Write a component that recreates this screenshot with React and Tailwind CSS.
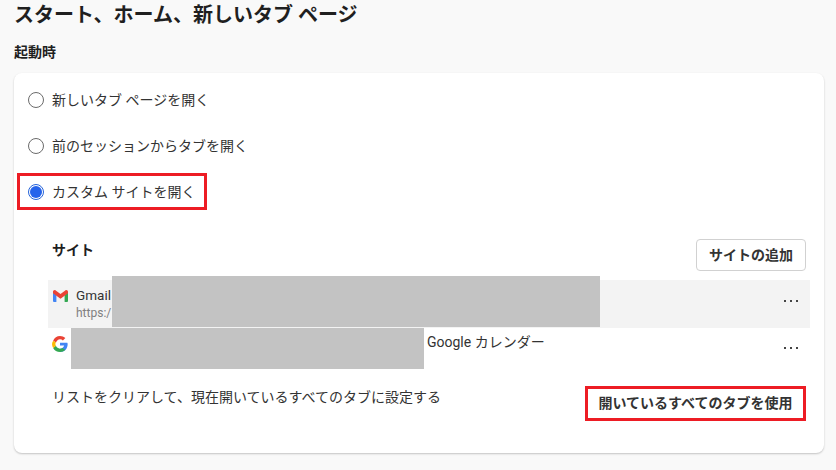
function Radio({ checked }) {
  if (checked) {
    return (
      <span className="flex h-[16px] w-[16px] shrink-0 items-center justify-center rounded-full border border-[#2563d9] bg-white">
        <span className="h-[12px] w-[12px] rounded-full bg-[#2563eb]"></span>
      </span>
    );
  }
  return <span className="h-[16px] w-[16px] shrink-0 rounded-full border-[1.5px] border-[#6b6b6b] bg-white"></span>;
}

function RadioRow({ label, checked }) {
  return (
    <div className="flex h-[46px] items-center gap-[8px] pl-[14px] text-[14px] text-[#333333]">
      <Radio checked={checked} />
      <span>{label}</span>
    </div>
  );
}

function Dots() {
  return (
    <div className="flex gap-[4px]">
      <span className="h-[2px] w-[2px] bg-[#444444]"></span>
      <span className="h-[2px] w-[2px] bg-[#444444]"></span>
      <span className="h-[2px] w-[2px] bg-[#444444]"></span>
    </div>
  );
}

function GmailIcon() {
  return (
    <svg width="15" height="12" viewBox="0 0 15 12">
      <path d="M0 2.500V11a1 1 0 0 0 1 1h2.400V5.200z" fill="#4285f4" />
      <path d="M15 2.500V11a1 1 0 0 1-1 1h-2.400V5.200z" fill="#34a853" />
      <path d="M0 1.800C0 .4 1.600-.4 2.700.4L7.500 4 12.300.4C13.400-.4 15 .4 15 1.800v1.400l-3.400 2.500L7.500 8.700 3.400 5.700 0 3.200z" fill="#ea4335" />
    </svg>
  );
}

function GoogleIcon() {
  return (
    <svg width="16" height="16" viewBox="0 0 48 48">
      <path d="M46 20H24v8.500h12.500C35 33.900 30.100 38 24 38v10c13 0 23-9 23-24 0-1.300-.4-2.700-1-4z" fill="#4285f4" />
      <path d="M3.500 14 12 19.500C14 14.500 18.600 10 24 10c3.400 0 6.300 1.100 8.700 3.200l7.400-7.200C36 2.400 30.400 0 24 0 14.900 0 6.900 5 3.500 14z" fill="#ea4335" />
      <path d="M24 48c6.100 0 11.600-2 15.700-5.700l-8-6.200C29.600 37.300 27 38 24 38c-5.500 0-10.300-3.500-12.200-8.500L3.400 36C7.300 43.400 15 48 24 48z" fill="#34a853" />
      <path d="M3.500 14C1.300 17.200 0 20.500 0 24c0 4.300 1.300 8.400 3.400 12l8.400-6.500C10.900 27.800 10 26 10 24s.9-3 2-4.500z" fill="#fbbc05" />
    </svg>
  );
}

export default function App() {
  return (
    <div className="h-[470px] w-[836px] overflow-hidden bg-[#f9f9f9] pl-[14px] font-['Roboto','Noto_Sans_CJK_JP',sans-serif]">
      <h1 className="pt-[1px] text-[20px] font-bold leading-[28px] text-[#1f1f1f]">スタート、ホーム、新しいタブ ページ</h1>
      <h2 className="mt-[13px] text-[14px] font-bold leading-[20px] text-[#1f1f1f]">起動時</h2>

      <div className="relative mt-[11px] h-[380px] w-[810px] rounded-[8px] bg-white pt-[4px] shadow-[0_1px_2px_rgba(0,0,0,0.22)]">
        <RadioRow label="新しいタブ ページを開く" />
        <RadioRow label="前のセッションからタブを開く" />
        <div className="relative">
          <RadioRow label="カスタム サイトを開く" checked />
          <div className="absolute left-[3px] top-[4px] h-[37px] w-[190px] border-[3px] border-[#ed1c24]"></div>
        </div>

        <div className="flex items-start justify-between pl-[38px] pr-[18px] pt-[24px]">
          <span className="pt-[1px] text-[14px] font-bold leading-[20px] text-[#1f1f1f]">サイト</span>
          <button className="h-[32px] w-[110px] rounded-[4px] border border-[#d1d1d1] bg-white text-[14px] font-bold text-[#333333]">サイトの追加</button>
        </div>

        <div className="relative ml-[34px] mr-[14px] mt-[9px]">
          <div className="flex h-[48px] items-start justify-between bg-[#f3f3f3] pl-[5px] pr-[12px]">
            <div className="flex gap-[8px]">
              <div className="pt-[10px]"><GmailIcon /></div>
              <div className="pt-[6px]">
                <div className="text-[13.500px] leading-[18px] text-[#333333]">Gmail</div>
                <div className="mt-[1px] text-[12px] leading-[16px] text-[#808080]">https:/</div>
              </div>
            </div>
            <div className="pt-[20px]"><Dots /></div>
          </div>
          <div className="flex h-[48px] items-start justify-between pl-[4px] pr-[12px]">
            <div className="flex items-start">
              <div className="pt-[8px]"><GoogleIcon /></div>
              <span className="ml-[359px] pt-[4px] text-[14px] leading-[20px] text-[#333333]">Google カレンダー</span>
            </div>
            <div className="pt-[19px]"><Dots /></div>
          </div>
          {/* redaction blocks */}
          <div className="absolute left-[64px] top-[-4px] h-[51px] w-[488px] bg-[#c3c3c3]"></div>
          <div className="absolute left-[23px] top-[48px] h-[41px] w-[353px] bg-[#c3c3c3]"></div>
        </div>

        <div className="flex items-start justify-between pl-[38px] pr-[18px] pt-[10px]">
          <span className="pt-[1px] text-[14px] leading-[20px] text-[#333333]">リストをクリアして、現在開いているすべてのタブに設定する</span>
          <button className="relative h-[35px] w-[221px] text-[14px] font-bold text-[#333333]">
            開いているすべてのタブを使用
            <span className="absolute inset-0 border-[3px] border-[#ed1c24]"></span>
          </button>
        </div>
      </div>
    </div>
  );
}
